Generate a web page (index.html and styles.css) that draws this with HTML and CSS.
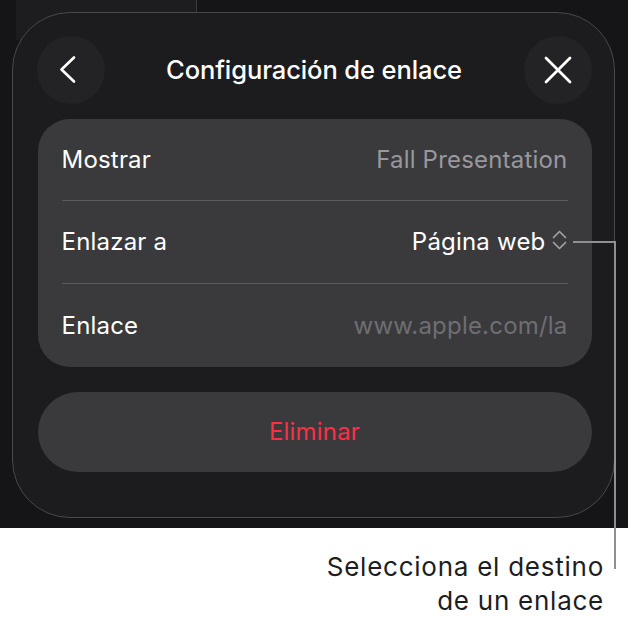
FILE: index.html
```html
<!DOCTYPE html>
<html lang="es">
<head>
<meta charset="utf-8">
<title>Configuración de enlace</title>
<link rel="stylesheet" href="styles.css">
</head>
<body>
<div class="stage">
  <div class="bg-window"></div>
  <div class="sheet">
    <div class="sheet-header">
      <button class="round-btn" aria-label="Atrás">
        <svg width="30" height="30" viewBox="0 0 30 30"><path d="M18 2.5 L5.5 14.5 L18 26.5" fill="none" stroke="#fff" stroke-width="2.6" stroke-linecap="round" stroke-linejoin="round"/></svg>
      </button>
      <h1 class="sheet-title">Configuración de enlace</h1>
      <button class="round-btn" aria-label="Cerrar">
        <svg width="30" height="30" viewBox="0 0 30 30"><path d="M3 3 L27 27 M27 3 L3 27" fill="none" stroke="#fff" stroke-width="2.8" stroke-linecap="round"/></svg>
      </button>
    </div>
    <div class="group">
      <div class="row">
        <span class="label">Mostrar</span>
        <span class="value muted">Fall Presentation</span>
      </div>
      <div class="row">
        <span class="label">Enlazar a</span>
        <span class="value picker">Página web
          <svg class="updown" width="15" height="22" viewBox="0 0 15 22"><path d="M1.5 8.5 L7.5 2.5 L13.5 8.5 M1.5 13.5 L7.5 19.5 L13.5 13.5" fill="none" stroke="#a1a1a6" stroke-width="1.7" stroke-linecap="round" stroke-linejoin="round"/></svg>
        </span>
      </div>
      <div class="row">
        <span class="label">Enlace</span>
        <span class="value faint">www.apple.com/la</span>
      </div>
    </div>
    <button class="delete-btn">Eliminar</button>
  </div>
  <div class="callout-h"></div>
</div>
<div class="caption-area">
  <div class="callout-v"></div>
  <p class="caption">Selecciona el destino<br>de un enlace</p>
</div>
</body>
</html>
```
FILE: styles.css
```css
* { box-sizing: border-box; }
html, body { margin: 0; padding: 0; background: #fff; }
body {
  width: 628px;
  font-family: "Inter", "Roboto", sans-serif;
}
.stage {
  position: relative;
  height: 528px;
  background: #151517;
  padding: 12px 13px 0 12px;
  overflow: hidden;
}
.bg-window {
  position: absolute;
  left: 16px;
  top: 0;
  width: 181px;
  height: 40px;
  background: #1d1d1f;
  border-right: 1.5px solid #3a3a3c;
}
.sheet {
  position: relative;
  height: 506px;
  background: #1c1c1e;
  border: 1.5px solid #48484b;
  border-radius: 58px;
  padding: 22.5px 22.5px 0 23.5px;
}
.sheet-header {
  display: flex;
  align-items: center;
  justify-content: space-between;
  height: 68px;
}
.round-btn {
  width: 68px;
  height: 68px;
  border-radius: 50%;
  border: 0;
  background: #232325;
  display: flex;
  align-items: center;
  justify-content: center;
  padding: 0;
}
.round-btn svg { display: block; }
.sheet-title {
  margin: 0;
  color: #fff;
  font-size: 25.5px;
  font-weight: 500;
  letter-spacing: -0.1px;
}
.group {
  margin: 15px 0 0 1px;
  width: 554px;
  background: #3a3a3c;
  border-radius: 32px;
  padding: 0 24px;
}
.row {
  height: 83.5px;
  display: flex;
  align-items: center;
  justify-content: space-between;
  font-size: 24px;
  letter-spacing: 0.2px;
  color: #fff;
}
.row:first-child { height: 81px; }
.row + .row { border-top: 1.5px solid #5b5b5f; }
.value.muted { color: #98989d; }
.value.faint { color: #6e6e73; }
.picker {
  display: flex;
  align-items: center;
  gap: 6px;
  margin-right: 1px;
}
.updown { display: block; margin-top: -3px; }
.delete-btn {
  display: block;
  margin: 25px 0 0 1px;
  width: 554px;
  height: 80px;
  border: 0;
  border-radius: 40px;
  background: #3a3a3c;
  color: #ff2d48;
  font-family: inherit;
  font-size: 24px;
  letter-spacing: 0.2px;
  font-weight: 400;
}
.callout-h {
  position: absolute;
  left: 573px;
  top: 241px;
  width: 43px;
  height: 2px;
  background: #8e8e93;
}
.caption-area {
  position: relative;
  height: 92px;
}
.callout-v {
  position: absolute;
  left: 614px;
  top: -287px;
  width: 2px;
  height: 328px;
  background: #8e8e93;
}
.caption {
  margin: 0;
  padding: 22px 24px 0 0;
  text-align: right;
  font-size: 26px;
  line-height: 34px;
  color: #1d1d1f;
  letter-spacing: 0.75px;
}
```
